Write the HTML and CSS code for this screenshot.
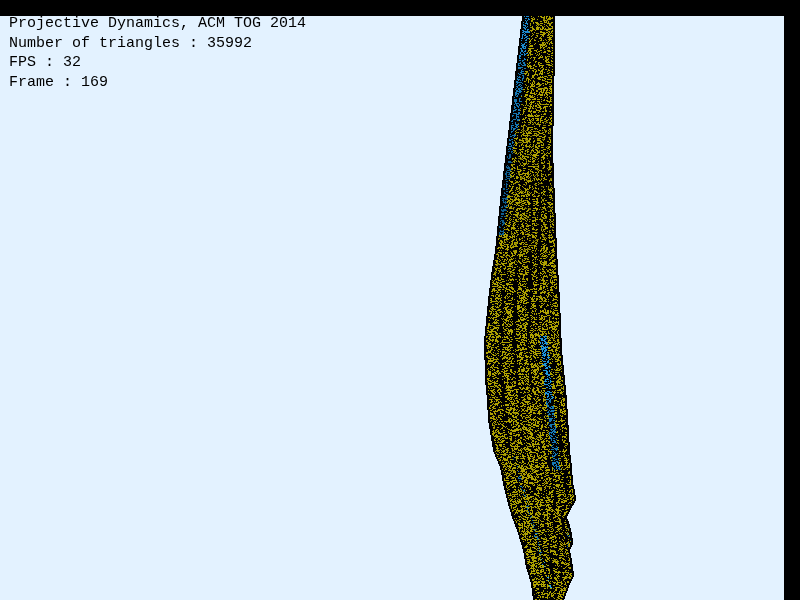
FILE: index.html
```html
<!DOCTYPE html>
<html lang="en">
<head>
<meta charset="utf-8">
<title>Projective Dynamics</title>
<link rel="stylesheet" href="styles.css">
</head>
<body>
<div class="window">
  <main class="viewport">
    <canvas id="scene" class="scene" width="784" height="584"></canvas>
    <div class="hud">
      <div class="hud-line">Projective Dynamics, ACM TOG 2014</div>
      <div class="hud-line">Number of triangles : 35992</div>
      <div class="hud-line">FPS : 32</div>
      <div class="hud-line">Frame : 169</div>
    </div>
  </main>
</div>
<script src="scene.js"></script>
</body>
</html>
```
FILE: styles.css
```css
html, body {
  margin: 0;
  height: 100%;
  background: #000;
  overflow: hidden;
}
.window {
  width: 800px;
  height: 600px;
  box-sizing: border-box;
  padding: 16px 16px 0 0;
}
.viewport {
  position: relative;
  width: 784px;
  height: 584px;
  background: #e3f2ff;
}
.scene {
  display: block;
}
.hud {
  position: absolute;
  top: -2px;
  left: 9px;
  font-family: "Liberation Mono", monospace;
  font-size: 15px;
  line-height: 19.6px;
  color: #000;
}
.hud-line {
  white-space: pre;
}
```
FILE: scene.js
```js
(function () {
  var ctx = document.getElementById('scene').getContext('2d');
  var left = [[16,522],[50,518],[100,512],[150,506],[200,500],[250,495],[275,491],[300,488],[320,486],[340,484],[380,485],[400,487],[420,488],[450,493],[467,500],[483,503],[500,507],[517,512],[533,518],[550,523],[567,526],[583,531],[600,533]];
  var right = [[16,555],[50,555],[100,554],[150,553],[200,555],[250,557],[300,560],[350,562],[400,567],[450,570],[467,572],[483,573],[490,575],[500,576],[510,570],[517,567],[522,569],[533,572],[543,573],[550,570],[560,572],[567,573],[575,574],[583,570],[600,564]];
  function at(t, y) {
    for (var i = 1; i < t.length; i++) {
      if (y <= t[i][0]) {
        var a = t[i - 1], b = t[i];
        return a[1] + (b[1] - a[1]) * (y - a[0]) / (b[0] - a[0]);
      }
    }
    return t[t.length - 1][1];
  }
  var seed = 169;
  function rnd() {
    seed = (seed + 0x6D2B79F5) | 0;
    var t = Math.imul(seed ^ (seed >>> 15), 1 | seed);
    t = (t + Math.imul(t ^ (t >>> 7), 61 | t)) ^ t;
    return ((t ^ (t >>> 14)) >>> 0) / 4294967296;
  }
  var folds = [0.22, 0.38, 0.55, 0.7, 0.86];
  for (var y = 16; y < 600; y++) {
    var L = Math.round(at(left, y)), R = Math.round(at(right, y));
    ctx.fillStyle = '#000';
    ctx.fillRect(L, y - 16, R - L, 1);
    for (var x = L + 2; x < R - 2; x++) {
      var u = (x - L) / (R - L);
      var p = 0.37;
      for (var i = 0; i < folds.length; i++) {
        var c = folds[i] + 0.02 * Math.sin(y / 80 + i * 2.1);
        var w = 0.016 + 0.01 * Math.sin(y / 47 + i);
        if (Math.abs(u - c) < w) p = 0.07;
      }
      if (rnd() > p) continue;
      var col = rnd() < 0.1 ? '#8f8500' : '#b0a300';
      if (y > 120 && y < 280 && rnd() < 0.18) col = '#7a7100';
      var bx = 543 + (y - 340) * 0.1;
      if (y < 235 && x - L < 7 + (y < 130 ? 2 : 0)) {
        col = y < 60 ? '#1c8ad0' : y < 150 ? '#1678b4' : '#0f5e90';
      } else if (y > 335 && y < 470 && Math.abs(x - bx) < 3.5) {
        col = y < 400 ? '#1e96dc' : '#1679b8';
      } else if (y > 455 && y < 590 && Math.abs(x - (517 + (y - 470) * 0.28)) < 1.5 && rnd() < 0.4) {
        col = y > 555 ? '#24a8e8' : '#1678b4';
      } else if (y > 510 && y < 550 && x > 566 && rnd() < 0.4) {
        col = '#0f5e90';
      }
      var wide = rnd() < 0.3 && x < R - 3;
      var tall = rnd() < 0.3;
      ctx.fillStyle = col;
      ctx.fillRect(x, y - 16, wide ? 2 : 1, tall ? 2 : 1);
    }
  }
})();
```
